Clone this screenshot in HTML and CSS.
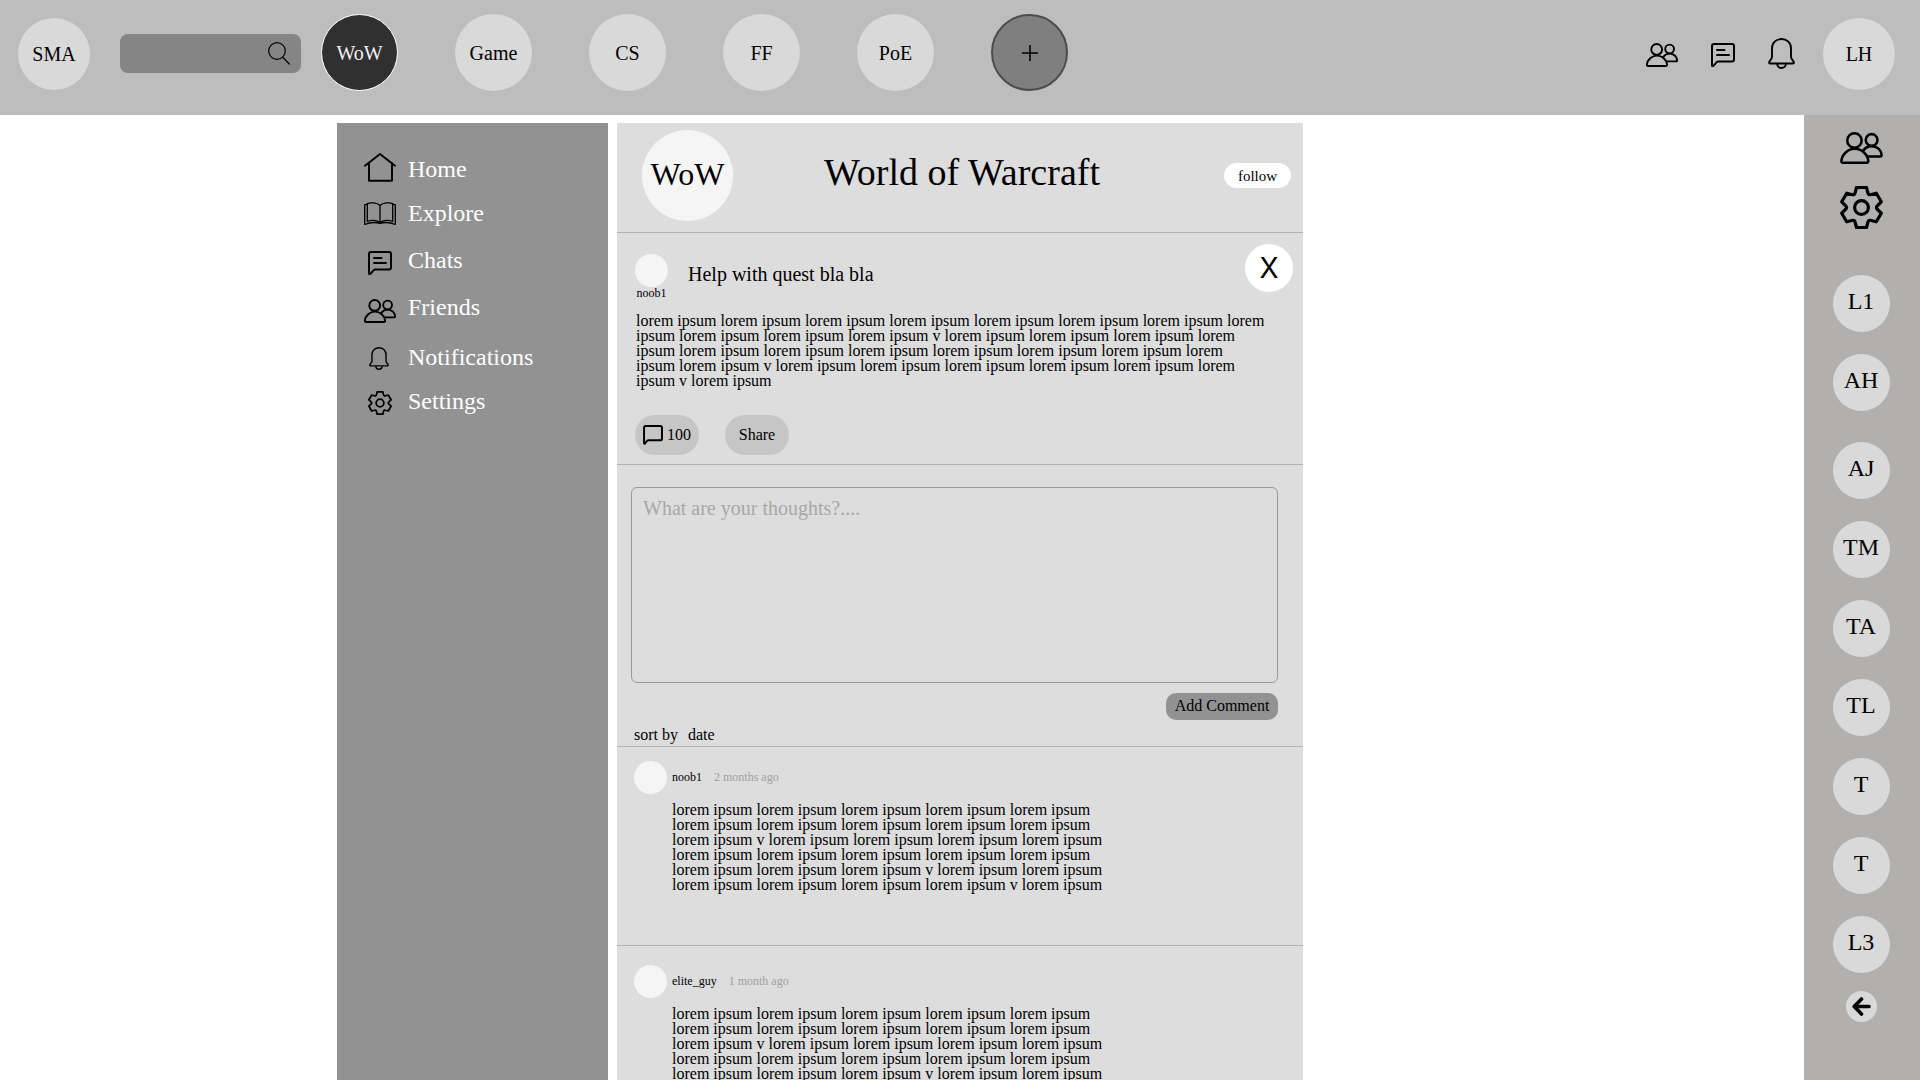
FILE: index.html
```html
<!DOCTYPE html>
<html lang="en">
<head>
<meta charset="utf-8">
<meta name="viewport" content="width=device-width, initial-scale=1">
<title>SMA - World of Warcraft</title>
<link rel="stylesheet" href="styles.css">
</head>
<body>
<svg class="sprite" aria-hidden="true">
  <symbol id="users" viewBox="0 0 32 24">
    <g fill="none" stroke="currentColor" stroke-width="1.9" stroke-linejoin="round" stroke-linecap="round">
      <circle cx="10.7" cy="6.4" r="5.4"/>
      <path d="M2 23h18a1.1 1.1 0 0 0 1.100-1.200C20.800 16.800 16 12.600 11 12.600S1.200 16.800.9 21.800A1.100 1.100 0 0 0 2 23z"/>
      <circle cx="23.6" cy="6" r="4.400"/>
      <path d="M17 14.200c1.800-2.400 4-3.600 6.600-3.600 4 0 7.200 2.800 7.500 6.600a1 1 0 0 1-1 1.200H21"/>
    </g>
  </symbol>
  <symbol id="chat" viewBox="0 0 24 24">
    <g fill="none" stroke="currentColor" stroke-width="2" stroke-linejoin="round" stroke-linecap="round">
      <path d="M1 22.300V3a2 2 0 0 1 2-2h18a2 2 0 0 1 2 2v13.500a2 2 0 0 1-2 2H7.200a2 2 0 0 0-1.500.7l-3 3.500Q1 24 1 22.300z"/>
      <path d="M6 7h7.500M6 12h12"/>
    </g>
  </symbol>
  <symbol id="comment" viewBox="0 0 19 19">
    <path fill="none" stroke="currentColor" stroke-width="1.9" stroke-linejoin="round" d="M1 17.500V2.500A1.500 1.500 0 0 1 2.500 1h14A1.500 1.500 0 0 1 18 2.500v10.500a1.500 1.500 0 0 1-1.500 1.500H5.300a2 2 0 0 0-1.400.6L1.600 17.800z"/>
  </symbol>
  <symbol id="bell" viewBox="0 0 27 31">
    <g fill="none" stroke="currentColor" stroke-width="1.900" stroke-linejoin="round">
      <path d="M2 25.500C1 25.500.8 24.300 1.400 23.600L3.200 21Q4 20 4 18.500V10.500C4 5 8 1 13.500 1S23 5 23 10.500V18.500Q23 20 23.800 21L25.600 23.600C26.200 24.300 26 25.500 25 25.500Z"/>
      <path d="M9.200 26a4.300 4 0 0 0 8.600 0"/>
    </g>
  </symbol>
  <symbol id="gear" viewBox="-21.5 -21.5 43 43">
    <g fill="none" stroke="currentColor" stroke-width="3.200" stroke-linejoin="round">
      <path d="M-5-20H5L6.300-15Q6.900-12 9.800-13L14.800-14.300 19.800-5.700 16.100-2Q13.800 0 16.100 2L19.800 5.700 14.800 14.300 9.800 13Q6.900 12 6.300 15L5 20H-5L-6.300 15Q-6.900 12-9.800 13L-14.800 14.300-19.800 5.700-16.100 2Q-13.800 0-16.100-2L-19.800-5.700-14.800-14.300-9.800-13Q-6.900-12-6.300-15Z"/>
      <circle r="6.900"/>
    </g>
  </symbol>
  <symbol id="home" viewBox="0 0 32 29">
    <path fill="none" stroke="currentColor" stroke-width="1.900" stroke-linejoin="round" stroke-linecap="round" d="M1 12.700 16 1l15 11.700M5 10v17.800h23V10"/>
  </symbol>
  <symbol id="book" viewBox="0 0 32 23">
    <path fill="none" stroke="currentColor" stroke-width="1.300" stroke-linejoin="round" d="M16 3.500C13 .500 7 .2 3.300 1.600V19.500C7 17.800 13 17.800 16 20.800 19 17.800 25 17.800 28.700 19.500V1.600C25 .2 19 .500 16 3.500V20.800M3.300 2.200.7 2.800V22.300C6 20.500 12 20 16 21.500 20 20 26 20.500 31.300 22.300V2.800L28.700 2.200"/>
  </symbol>
</svg>

<header class="topbar">
  <a class="circle circle-brand" href="#">SMA</a>
  <form class="search" role="search">
    <input class="search-input" type="search" aria-label="Search">
    <button class="icon-button search-button" type="submit" aria-label="Search">
      <svg width="22" height="23" viewBox="0 0 22 23"><g fill="none" stroke="#000" stroke-width="1.200" stroke-linecap="round"><circle cx="9" cy="9" r="8.300"/><path d="m15 15.500 6.300 6.500"/></g></svg>
    </button>
  </form>
  <nav class="games" aria-label="Games">
    <a class="circle circle-game circle-active" href="#" aria-current="page">WoW</a>
    <a class="circle circle-game" href="#">Game</a>
    <a class="circle circle-game" href="#">CS</a>
    <a class="circle circle-game" href="#">FF</a>
    <a class="circle circle-game" href="#">PoE</a>
    <button class="circle circle-game circle-add" type="button" aria-label="Add game">
      <svg width="16" height="16" viewBox="0 0 16 16"><path stroke="#000" stroke-width="1.600" d="M8 0v16M0 8h16"/></svg>
    </button>
  </nav>
  <div class="account">
    <button class="icon-button account-friends" type="button" aria-label="Friends"><svg width="32" height="32"><use href="#users" y="5" width="32" height="24"/></svg></button>
    <button class="icon-button" type="button" aria-label="Chats"><svg width="32" height="32"><use href="#chat" x="4" y="5" width="24" height="24"/></svg></button>
    <button class="icon-button" type="button" aria-label="Notifications"><svg width="32" height="32"><use href="#bell" x="3" width="27" height="31"/></svg></button>
    <a class="circle circle-brand" href="#">LH</a>
  </div>
</header>

<div class="layout">
  <nav class="sidebar" aria-label="Main">
    <a class="side-link" href="#"><svg width="32" height="32"><use href="#home" width="32" height="29"/></svg>Home</a>
    <a class="side-link" href="#"><svg width="32" height="32"><use href="#book" y="5" width="32" height="23"/></svg>Explore</a>
    <a class="side-link" href="#"><svg width="32" height="32"><use href="#chat" x="4" y="7" width="24" height="24"/></svg>Chats</a>
    <a class="side-link" href="#"><svg width="32" height="32"><use href="#users" y="8" width="32" height="24"/></svg>Friends</a>
    <a class="side-link" href="#"><svg width="32" height="32"><use href="#bell" x="5" y="6" width="20" height="23"/></svg>Notifications</a>
    <a class="side-link" href="#"><svg width="32" height="32"><use href="#gear" x="4" y="6" width="24" height="24"/></svg>Settings</a>
  </nav>

  <main class="feed">
    <header class="community">
      <div class="circle community-logo">WoW</div>
      <h1 class="community-title">World of Warcraft</h1>
      <button class="follow" type="button">follow</button>
    </header>

    <article class="post">
      <header class="post-head">
        <div class="author">
          <div class="avatar"></div>
          <span class="name">noob1</span>
        </div>
        <h2 class="post-title">Help with quest bla bla</h2>
        <button class="close" type="button" aria-label="Close post">X</button>
      </header>
      <p class="post-text">lorem ipsum lorem ipsum lorem ipsum lorem ipsum lorem ipsum lorem ipsum lorem ipsum lorem<br>ipsum lorem ipsum lorem ipsum lorem ipsum v lorem ipsum lorem ipsum lorem ipsum lorem<br>ipsum lorem ipsum lorem ipsum lorem ipsum lorem ipsum lorem ipsum lorem ipsum lorem<br>ipsum lorem ipsum v lorem ipsum lorem ipsum lorem ipsum lorem ipsum lorem ipsum lorem<br>ipsum v lorem ipsum</p>
      <div class="actions">
        <button class="pill" type="button"><svg width="20" height="20"><use href="#comment" width="20" height="20"/></svg>100</button>
        <button class="pill" type="button">Share</button>
      </div>
    </article>

    <form class="reply">
      <textarea class="reply-box" aria-label="Comment" placeholder="What are your thoughts?...."></textarea>
      <button class="reply-button" type="button">Add Comment</button>
      <div class="sort">
        <label for="sort">sort by</label>
        <select class="sort-select" id="sort"><option>date</option></select>
      </div>
    </form>

    <section class="comments" aria-label="Comments">
      <article class="comment">
        <div class="avatar"></div>
        <div class="byline"><span class="name">noob1</span><span class="time">2 months ago</span></div>
        <p class="comment-text">lorem ipsum lorem ipsum lorem ipsum lorem ipsum lorem ipsum lorem ipsum lorem ipsum lorem ipsum lorem ipsum lorem ipsum lorem ipsum v lorem ipsum lorem ipsum lorem ipsum lorem ipsum lorem ipsum lorem ipsum lorem ipsum lorem ipsum lorem ipsum lorem ipsum lorem ipsum lorem ipsum v lorem ipsum lorem ipsum lorem ipsum lorem ipsum lorem ipsum lorem ipsum v lorem ipsum</p>
      </article>
      <article class="comment">
        <div class="avatar"></div>
        <div class="byline"><span class="name">elite_guy</span><span class="time">1 month ago</span></div>
        <p class="comment-text">lorem ipsum lorem ipsum lorem ipsum lorem ipsum lorem ipsum lorem ipsum lorem ipsum lorem ipsum lorem ipsum lorem ipsum lorem ipsum v lorem ipsum lorem ipsum lorem ipsum lorem ipsum lorem ipsum lorem ipsum lorem ipsum lorem ipsum lorem ipsum lorem ipsum lorem ipsum lorem ipsum v lorem ipsum lorem ipsum</p>
      </article>
    </section>
  </main>

  <aside class="rail" aria-label="Friends online">
    <button class="icon-button" type="button" aria-label="Friends"><svg width="43" height="32"><use href="#users" width="43" height="32"/></svg></button>
    <button class="icon-button rail-settings" type="button" aria-label="Settings"><svg width="43" height="43"><use href="#gear" width="43" height="43"/></svg></button>
    <div class="rail-group">
      <a class="circle circle-friend" href="#">L1</a>
      <a class="circle circle-friend" href="#">AH</a>
    </div>
    <div class="rail-group">
      <a class="circle circle-friend" href="#">AJ</a>
      <a class="circle circle-friend" href="#">TM</a>
      <a class="circle circle-friend" href="#">TA</a>
      <a class="circle circle-friend" href="#">TL</a>
      <a class="circle circle-friend" href="#">T</a>
      <a class="circle circle-friend" href="#">T</a>
      <a class="circle circle-friend" href="#">L3</a>
    </div>
    <button class="circle rail-back" type="button" aria-label="Collapse">
      <svg width="19" height="19" viewBox="0 0 19 19"><path fill="none" stroke="#000" stroke-width="3.600" stroke-linecap="round" stroke-linejoin="round" d="M9.500 2 2.200 9.500l7.300 7.500M2.500 9.500h14.500"/></svg>
    </button>
  </aside>
</div>
</body>
</html>
```
FILE: styles.css
```css
*,
*::before,
*::after {
  box-sizing: border-box;
}

body {
  display: flex;
  flex-direction: column;
  height: 100vh;
  margin: 0;
  overflow: hidden;
  background: #fff;
  color: #000;
  font-family: "Liberation Serif", "Times New Roman", serif;
  font-size: 16px;
  line-height: 20px;
}

h1,
h2,
p {
  margin: 0;
  font-weight: 400;
}

a {
  color: inherit;
  text-decoration: none;
}

button,
input,
select,
textarea {
  margin: 0;
  padding: 0;
  border: 0;
  color: inherit;
  font: inherit;
}

button {
  cursor: pointer;
}

svg {
  display: block;
  flex-shrink: 0;
}

.sprite {
  display: none;
}

.icon-button {
  background: none;
}

.circle {
  display: flex;
  flex-shrink: 0;
  align-items: center;
  justify-content: center;
  border-radius: 50%;
  background: #d9d9d9;
}

/* Top bar */

.topbar {
  display: flex;
  flex-shrink: 0;
  align-items: center;
  height: 115px;
  padding: 0 25px 7px 18px;
  background: #bdbdbd;
  font-size: 20px;
}

.circle-brand {
  width: 72px;
  height: 72px;
}

.search {
  display: flex;
  align-items: center;
  width: 181px;
  height: 39px;
  margin: 0 20px 2px 30px;
  padding: 0 11px;
  border-radius: 8px;
  background: #858585;
}

.search-input {
  flex: 1;
  min-width: 0;
  background: none;
  outline: 0;
}

.games {
  display: flex;
  gap: 57px;
  margin-bottom: 3px;
}

.circle-game {
  width: 77px;
  height: 77px;
}

.circle-active {
  border: 1px solid #fff;
  background: #303030;
  color: #f0f0f0;
}

.circle-add {
  border: 2px solid #4c4c4c;
  background: #7f7f7f;
}

.account {
  display: flex;
  align-items: center;
  gap: 26px;
  margin-left: auto;
}

.account-friends {
  margin-right: 3px;
}

/* Page columns */

.layout {
  display: grid;
  flex: 1;
  grid-template-columns: 337fr 271fr 9px 686fr 501fr 116px;
  min-height: 0;
}

.sidebar {
  display: grid;
  grid-column: 2;
  grid-template-rows: 44px 47px 47px 50px 44px 44px;
  align-content: start;
  margin-top: 8px;
  padding: 30px 27px;
  background: #929292;
}

.side-link {
  display: flex;
  gap: 12px;
  color: #fff;
  font-size: 24px;
  line-height: 32px;
}

.side-link svg {
  color: #000;
}

.feed {
  grid-column: 4;
  margin-top: 8px;
  overflow-y: auto;
  background: #ddd;
  scrollbar-width: none;
}

/* Community header */

.community {
  display: grid;
  grid-template-columns: 1fr auto 1fr;
  align-items: center;
  height: 110px;
  padding: 0 12px 4px;
  border-bottom: 1px solid #b0b0b0;
}

.community-logo {
  width: 91px;
  height: 91px;
  margin-left: 13px;
  padding-bottom: 4px;
  background: #f5f5f5;
  font-size: 32px;
}

.community-title {
  padding: 0 0 8px 4px;
  font-size: 38px;
  line-height: 44px;
}

.follow {
  justify-self: end;
  width: 67px;
  height: 25px;
  border-radius: 13px;
  background: #fff;
  font-size: 15px;
}

/* Post */

.post {
  padding: 11px 10px 9px 18px;
  border-bottom: 1px solid #b0b0b0;
}

.post-head {
  display: flex;
  align-items: flex-start;
}

.author {
  display: flex;
  flex-direction: column;
  align-items: center;
  width: 33px;
  margin: 10px 20px 0 0;
}

.avatar {
  width: 33px;
  height: 33px;
  border-radius: 50%;
  background: #f5f5f5;
}

.name,
.time {
  font-size: 12px;
  line-height: 12px;
}

.time {
  color: #a0a0a0;
}

.post-title {
  flex: 1;
  padding-top: 18px;
  font-size: 20px;
  line-height: 24px;
}

.close {
  width: 48px;
  height: 48px;
  border-radius: 50%;
  background: #fff;
  font-family: Inter, "Liberation Sans", sans-serif;
  font-size: 28px;
}

.post-text,
.comment-text {
  line-height: 15px;
}

.post-text {
  padding: 14px 0 0 1px;
}

.actions {
  display: flex;
  gap: 26px;
  padding-top: 27px;
}

.pill {
  display: flex;
  align-items: center;
  justify-content: center;
  gap: 4px;
  width: 64px;
  height: 40px;
  padding-bottom: 1px;
  border-radius: 20px;
  background: #c6c6c6;
}

/* Reply form */

.reply {
  display: flex;
  flex-direction: column;
  padding: 22px 25px 0 14px;
  border-bottom: 1px solid #b0b0b0;
}

.reply-box {
  height: 196px;
  padding: 8px 11px;
  border: 1px solid #999;
  border-radius: 6px;
  background: none;
  font-size: 20px;
  line-height: 24px;
  resize: none;
}

.reply-box::placeholder {
  color: #a8a8a8;
  opacity: 1;
}

.reply-button {
  align-self: flex-end;
  width: 112px;
  height: 27px;
  margin-top: 10px;
  padding-bottom: 1px;
  border-radius: 10px;
  background: #929292;
}

.sort {
  display: flex;
  gap: 10px;
  padding: 5px 3px 1px;
}

.sort-select {
  width: 60px;
  height: 20px;
  appearance: none;
  background: none;
}

/* Comments */

.comment {
  display: grid;
  grid-template-columns: 33px 1fr;
  column-gap: 5px;
  align-items: center;
  min-height: 199px;
  align-content: start;
  padding: 19px 17px 0;
  border-bottom: 1px solid #b0b0b0;
}

.comment:first-child {
  padding-top: 14px;
}

.byline {
  display: flex;
  gap: 12px;
  padding-bottom: 2px;
}

.comment-text {
  grid-column: 2;
  max-width: 440px;
  padding-top: 8px;
}

/* Friends rail */

.rail {
  display: flex;
  grid-column: 6;
  flex-direction: column;
  align-items: center;
  padding: 17px 2px 0 0;
  overflow: hidden;
  background: #b1b0ae;
}

.rail-settings {
  margin: 22px 0 15px;
}

.rail-group {
  display: flex;
  flex-direction: column;
  gap: 22px;
  padding-top: 31px;
}

.circle-friend {
  width: 57px;
  height: 57px;
  padding-bottom: 5px;
  font-size: 24px;
}

.rail-back {
  width: 31px;
  height: 31px;
  margin-top: 18px;
}
```
